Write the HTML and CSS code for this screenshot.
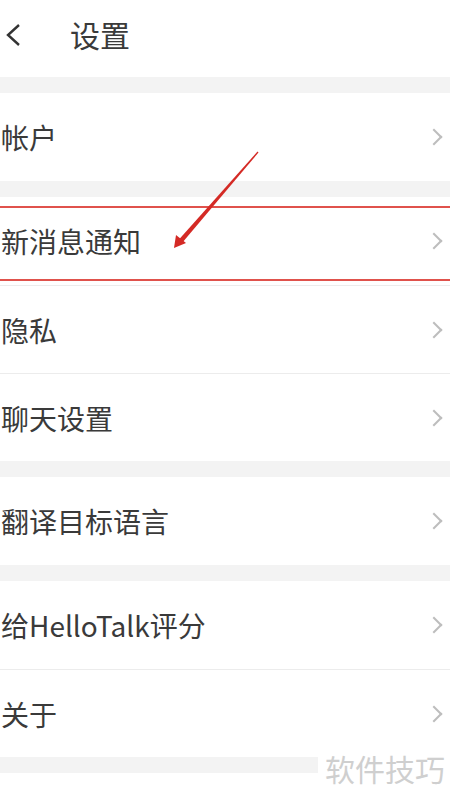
FILE: index.html
```html
<!DOCTYPE html>
<html lang="zh-CN">
<head>
    <meta charset="UTF-8">
    <meta name="viewport" content="width=device-width, initial-scale=1.0">
    <title>设置</title>
    <link rel="stylesheet" href="styles.css">
</head>
<body>

    <div class="pantalla">
        <div class="cabecera">
            <svg class="atras" width="18" height="24" viewBox="0 0 18 24">
                <path d="M15 2 L4 12 L15 22" fill="none" stroke="#333" stroke-width="2.4"/>
            </svg>
            <h1>设置</h1>
        </div>

        <div class="lista">
            <div class="grupo">
                <div class="fila"><span>帐户</span><i class="flecha"></i></div>
            </div>

            <div class="grupo">
                <div class="fila"><span>新消息通知</span><i class="flecha"></i></div>
                <div class="fila"><span>隐私</span><i class="flecha"></i></div>
                <div class="fila"><span>聊天设置</span><i class="flecha"></i></div>
            </div>

            <div class="grupo">
                <div class="fila"><span>翻译目标语言</span><i class="flecha"></i></div>
            </div>

            <div class="grupo">
                <div class="fila"><span>给HelloTalk评分</span><i class="flecha"></i></div>
                <div class="fila"><span>关于</span><i class="flecha"></i></div>
            </div>

            <div class="grupo">
                <div class="fila"><span>清除缓存</span><i class="flecha"></i></div>
            </div>
        </div>

        <!-- marca roja sobre la captura -->
        <div class="marco-rojo"></div>
        <svg class="flecha-roja" width="450" height="300" viewBox="0 0 450 300">
            <path d="M257.5 151.5 L258.5 152.5 L182 243 L178.5 240 Z" fill="#d42a25"/>
            <path d="M174 248 L176 235 L186 243 Z" fill="#d42a25"/>
        </svg>

        <div class="marca-agua">软件技巧</div>
    </div>

</body>
</html>
```

FILE: styles.css
```css
body {
    margin: 0;
    padding: 0;
    font-family: "Noto Sans CJK SC", "Noto Sans", sans-serif;
    background-color: #fff;
}

.pantalla {
    position: relative;
    width: 450px;
    height: 801px;
    overflow: hidden;
    background-color: #f3f3f3;
}

/* Cabecera */
.cabecera {
    height: 77px;
    background-color: #fff;
    display: flex;
    align-items: center;
}

.atras {
    margin-left: 4px;
    margin-top: -8px;
}

.cabecera h1 {
    margin: -9px 0 0 48px;
    font-size: 30px;
    font-weight: normal;
    color: #3a3a3a;
}

/* Lista */
.grupo {
    margin-top: 16px;
    background-color: #fff;
}

.fila {
    height: 88px;
    display: flex;
    align-items: center;
    justify-content: space-between;
    border-top: 1px solid #ececec;
    box-sizing: border-box;
    padding: 0 4px 0 1px;
    font-size: 28px;
    color: #3a3a3a;
}

.fila:first-child {
    border-top: none;
}

.flecha {
    width: 10px;
    height: 10px;
    border-top: 2px solid #bdbdbd;
    border-right: 2px solid #bdbdbd;
    transform: rotate(45deg);
    margin-right: 6px;
}

/* Anotaciones */
.marco-rojo {
    position: absolute;
    left: -2px;
    top: 206px;
    width: 454px;
    height: 71px;
    border-top: 2px solid #e0524c;
    border-bottom: 2px solid #e0524c;
}

.flecha-roja {
    position: absolute;
    left: 0;
    top: 0;
}

.marca-agua {
    position: absolute;
    right: 0;
    top: 748px;
    padding: 0 5px 0 7px;
    background-color: #fff;
    color: #cfcfcf;
    font-size: 30px;
    line-height: 40px;
}
```
